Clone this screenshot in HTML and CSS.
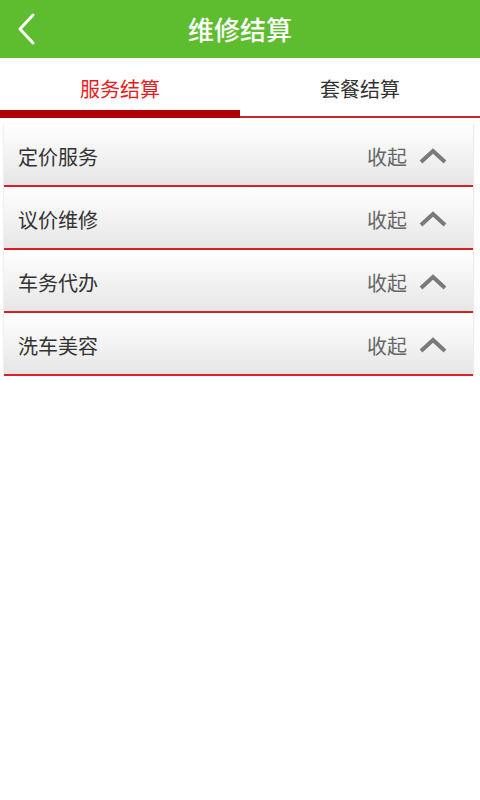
FILE: index.html
```html
<!DOCTYPE html>
<html lang="zh">
<head>
<meta charset="utf-8">
<title>维修结算</title>
<link rel="stylesheet" href="styles.css">
</head>
<body>
<header class="topbar">
  <a class="back" href="#" aria-label="返回">
    <svg width="20" height="32" viewBox="0 0 20 32"><path d="M16 2 L3 16 L16 30" fill="none" stroke="#fff" stroke-width="3" stroke-linecap="round" stroke-linejoin="round"/></svg>
  </a>
  <h1 class="title">维修结算</h1>
  <span class="spacer"></span>
</header>
<nav class="tabs">
  <div class="tab active">服务结算</div>
  <div class="tab">套餐结算</div>
</nav>
<section class="list">
  <div class="row"><span class="name">定价服务</span><span class="toggle">收起<svg class="chev" width="28" height="20" viewBox="0 0 28 20"><path d="M2 16 L14 5 L26 16" fill="none" stroke="#7a7a7a" stroke-width="4"/></svg></span></div>
  <div class="row"><span class="name">议价维修</span><span class="toggle">收起<svg class="chev" width="28" height="20" viewBox="0 0 28 20"><path d="M2 16 L14 5 L26 16" fill="none" stroke="#7a7a7a" stroke-width="4"/></svg></span></div>
  <div class="row"><span class="name">车务代办</span><span class="toggle">收起<svg class="chev" width="28" height="20" viewBox="0 0 28 20"><path d="M2 16 L14 5 L26 16" fill="none" stroke="#7a7a7a" stroke-width="4"/></svg></span></div>
  <div class="row"><span class="name">洗车美容</span><span class="toggle">收起<svg class="chev" width="28" height="20" viewBox="0 0 28 20"><path d="M2 16 L14 5 L26 16" fill="none" stroke="#7a7a7a" stroke-width="4"/></svg></span></div>
</section>
</body>
</html>
```
FILE: styles.css
```css
* { box-sizing: border-box; }
body {
  margin: 0;
  background: #fff;
  font-family: "Noto Sans CJK SC", "Noto Sans", sans-serif;
}
.topbar {
  height: 58px;
  background: #5dbd2e;
  display: grid;
  grid-template-columns: 60px 1fr 60px;
  align-items: center;
}
.back {
  display: flex;
  align-items: center;
  padding-left: 17px;
  height: 58px;
}
.title {
  margin: 0;
  text-align: center;
  color: #fff;
  font-size: 26px;
  font-weight: 500;
  line-height: 58px;
}
.tabs {
  display: flex;
  height: 60px;
  align-items: stretch;
}
.tab {
  flex: 1;
  display: flex;
  align-items: center;
  justify-content: center;
  font-size: 20px;
  color: #333;
  border-bottom: 2px solid #c9252b;
  padding-top: 2px;
}
.tab.active {
  color: #ea1b1f;
  border-bottom: 8px solid #b00006;
  padding-top: 8px;
}
.list {
  padding: 6px 7px 0 4px;
  display: flex;
  flex-direction: column;
}
.row {
  height: 63px;
  display: flex;
  align-items: center;
  justify-content: space-between;
  padding: 3px 26px 0 14px;
  background: linear-gradient(#ffffff, #e6e6e6);
  border-bottom: 2px solid #dd1f28;
  box-shadow: 1px 0 1px rgba(0,0,0,0.08), -1px 0 1px rgba(0,0,0,0.06);
}
.name {
  font-size: 20px;
  color: #333;
}
.toggle {
  display: flex;
  align-items: center;
  gap: 12px;
  font-size: 20px;
  color: #666;
}
.chev {
  filter: blur(0.6px);
}
```
